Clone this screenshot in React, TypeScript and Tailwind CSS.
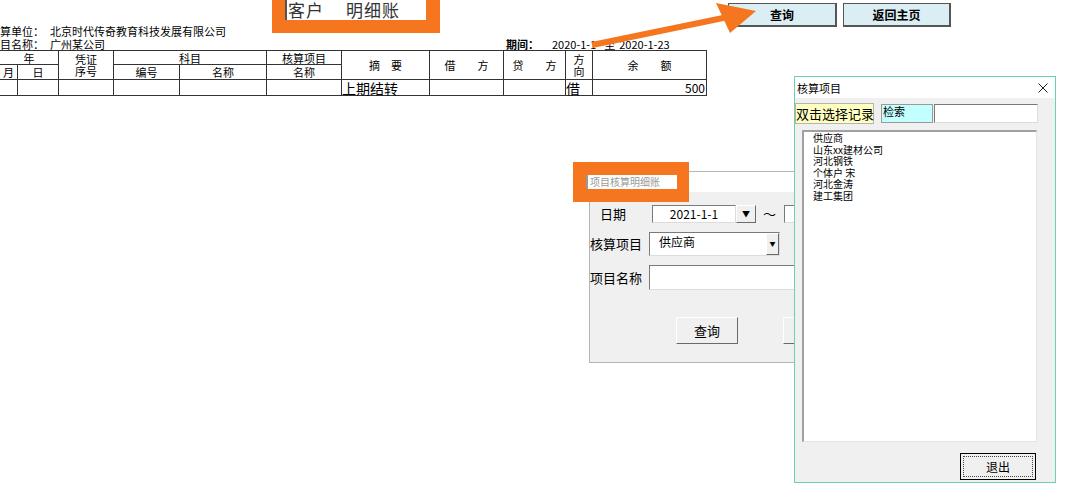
import React from "react";

const cjk = { fontFamily: '"Noto Sans CJK SC", "Noto Sans", sans-serif' };

function SheetTop() {
  return (
    <div className="flex h-[50px] text-[11px] leading-[13px] text-black">
      <div className="w-[272px] pt-[25px]">
        <div className="flex">
          <span className="w-[50px]">算单位：</span>
          <span>北京时代传奇教育科技发展有限公司</span>
        </div>
        <div className="flex">
          <span className="w-[50px]">目名称：</span>
          <span>广州某公司</span>
        </div>
      </div>
      <div className="w-[168px] h-[33px] bg-[#f5761f] pl-[13px] pr-[14px]">
        <div className="h-[20px] bg-white border-l-2 border-[#555]">
          <div className="text-[17px] leading-[20px] text-[#333] pl-[1px] tracking-[1px] whitespace-nowrap">
            客户<span className="ml-[22px]">明细账</span>
          </div>
        </div>
      </div>
      <div className="w-[288px] pt-[38px] pl-[66px] flex whitespace-nowrap">
        <span className="font-bold">期间：</span>
        <span className="ml-[13px]">2020-1-1</span>
        <span className="ml-[8px]">至</span>
        <span className="ml-[4px]">2020-1-23</span>
      </div>
      <div className="flex gap-[6px] pt-[3px]">
        <div className="w-[109px] h-[24px] bg-[#daeef3] border border-[#555] border-r-2 border-b-2 flex items-center justify-center text-[12px] font-bold">
          查询
        </div>
        <div className="w-[108px] h-[24px] bg-[#daeef3] border border-[#555] border-r-2 border-b-2 flex items-center justify-center text-[12px] font-bold">
          返回主页
        </div>
      </div>
    </div>
  );
}

function Ledger() {
  const cell = "border border-[#333] p-0 text-center align-middle";
  return (
    <table className="border-collapse table-fixed text-[11px] leading-[12px] -ml-[1px]" style={{ width: 707 }}>
      <colgroup>
        {[18, 41, 55, 66, 87, 75, 88, 74, 62, 27, 114].map((w, i) => (
          <col key={i} style={{ width: w }} />
        ))}
      </colgroup>
      <tbody>
        <tr className="h-[14px]">
          <td className={cell} colSpan={2}>年</td>
          <td className={cell} rowSpan={2}>凭证<br />序号</td>
          <td className={cell} colSpan={2}>科目</td>
          <td className={cell}>核算项目</td>
          <td className={cell} rowSpan={2}>摘　要</td>
          <td className={cell} rowSpan={2}>借　　方</td>
          <td className={cell} rowSpan={2}>贷　　方</td>
          <td className={cell} rowSpan={2}>方<br />向</td>
          <td className={cell} rowSpan={2}>余　　额</td>
        </tr>
        <tr className="h-[15px]">
          <td className={cell}>月</td>
          <td className={cell}>日</td>
          <td className={cell}>编号</td>
          <td className={cell}>名称</td>
          <td className={cell}>名称</td>
        </tr>
        <tr className="h-[16px]">
          <td className={cell}></td>
          <td className={cell}></td>
          <td className={cell}></td>
          <td className={cell}></td>
          <td className={cell}></td>
          <td className={cell}></td>
          <td className={`${cell} text-left text-[14px] leading-[14px]`}>上期结转</td>
          <td className={cell}></td>
          <td className={cell}></td>
          <td className={`${cell} text-left text-[14px] leading-[14px]`}>借</td>
          <td className={`${cell} text-right pr-[1px] text-[12px]`}>500</td>
        </tr>
      </tbody>
    </table>
  );
}

function Arrow() {
  return (
    <svg className="absolute left-0 top-0 pointer-events-none" width="1080" height="60">
      <line x1="592" y1="45" x2="728" y2="17" stroke="#f5761f" strokeWidth="6" />
      <polygon points="716,3 756,11 730,33" fill="#f5761f" />
    </svg>
  );
}

const sunken = "bg-white border border-t-[#7a7a7a] border-l-[#7a7a7a] border-r-[#dcdcdc] border-b-[#dcdcdc]";
const raised = "bg-[#f0f0f0] border border-t-white border-l-white border-r-[#6a6a6a] border-b-[#6a6a6a]";

function DetailDialog() {
  return (
    <div className="absolute left-[589px] top-[171px] w-[270px] h-[192px] border border-[#b4b4b4] bg-[#f0f0f0] flex flex-col">
      <div className="h-[20px] bg-white shrink-0" />
      <div className="flex flex-col text-[13px] leading-[16px] text-black">
        <div className="flex items-center mt-[13px] h-[18px]">
          <span className="w-[62px] pl-[10px]">日期</span>
          <div className={`${sunken} w-[84px] h-[18px] flex items-center justify-center text-[12px]`}>2021-1-1</div>
          <div className={`${raised} w-[20px] h-[18px] flex items-center justify-center text-[8px]`}>▼</div>
          <span className="ml-[7px] w-[21px]">～</span>
          <div className={`${sunken} w-[60px] h-[18px]`} />
        </div>
        <div className="flex items-center mt-[9px] h-[24px]">
          <span className="w-[59px]">核算项目</span>
          <div className={`${sunken} w-[131px] h-[24px] flex`}>
            <span className="flex-1 pl-[9px] pt-[1px] text-[12px]">供应商</span>
            <div className={`${raised} w-[13px] flex items-center justify-center text-[6px]`}>▼</div>
          </div>
        </div>
        <div className="flex items-center mt-[9px] h-[25px]">
          <span className="w-[59px]">项目名称</span>
          <div className={`${sunken} w-[200px] h-[25px]`} />
        </div>
        <div className="flex mt-[27px] pl-[86px] gap-[45px]">
          <div className={`${raised} w-[62px] h-[27px] flex items-center justify-center text-[13px]`}>查询</div>
          <div className={`${raised} w-[62px] h-[27px]`} />
        </div>
      </div>
      <div className="absolute -left-[17px] -top-[10px] w-[116px] h-[40px] bg-[#f5761f] pl-[13px] pt-[13px]">
        <div className="w-[91px] h-[14px] bg-white border-l-2 border-[#999] text-[10px] leading-[14px] text-[#9a9a9a] pl-[2px] whitespace-nowrap">
          项目核算明细账
        </div>
      </div>
    </div>
  );
}

function PickerDialog() {
  const items = ["供应商", "山东xx建材公司", "河北钢铁", "个体户 宋", "河北金涛", "建工集团"];
  return (
    <div className="absolute left-[794px] top-[76px] w-[262px] h-[407px] border border-[#6fd0ac] bg-[#f0f0f0] flex flex-col">
      <div className="h-[21px] bg-white flex items-center justify-between pl-[2px] pr-[7px] shrink-0">
        <span className="text-[11px] leading-[12px]">核算项目</span>
        <svg width="10" height="10" viewBox="0 0 10 10">
          <path d="M0.5 0.5 L9.5 9.5 M9.5 0.5 L0.5 9.5" stroke="#222" strokeWidth="1" />
        </svg>
      </div>
      <div className="flex items-start mt-[5px]">
        <div className="w-[79px] h-[21px] bg-[#ffffc0] border border-[#b4b4b4] text-[13px] leading-[19px] whitespace-nowrap">双击选择记录</div>
        <div className="ml-[7px] mt-[1px] w-[52px] h-[19px] bg-[#c4ffff] border border-[#9a9a9a] text-[11px] leading-[12px] pl-[1px]">检索</div>
        <div className={`${sunken} mt-[1px] ml-[1px] w-[104px] h-[19px]`} />
      </div>
      <div className="ml-[7px] mt-[6px] w-[235px] h-[312px] bg-white border-l-2 border-t-2 border-[#a0a0a0] border-r border-b border-r-[#e4e4e4] border-b-[#e4e4e4] pl-[9px] text-[10px] leading-[11.5px]">
        {items.map((it) => (
          <div key={it}>{it}</div>
        ))}
      </div>
      <div className="flex justify-end pr-[19px] mt-[11px]">
        <div className="w-[76px] h-[27px] bg-[#f0f0f0] border border-black p-[2px]">
          <div className="w-full h-full border border-dotted border-[#444] flex items-center justify-center text-[12px]">退出</div>
        </div>
      </div>
    </div>
  );
}

export default function App() {
  return (
    <div className="relative w-[1080px] h-[485px] overflow-hidden bg-white text-black" style={cjk}>
      <SheetTop />
      <Ledger />
      <Arrow />
      <DetailDialog />
      <PickerDialog />
    </div>
  );
}
